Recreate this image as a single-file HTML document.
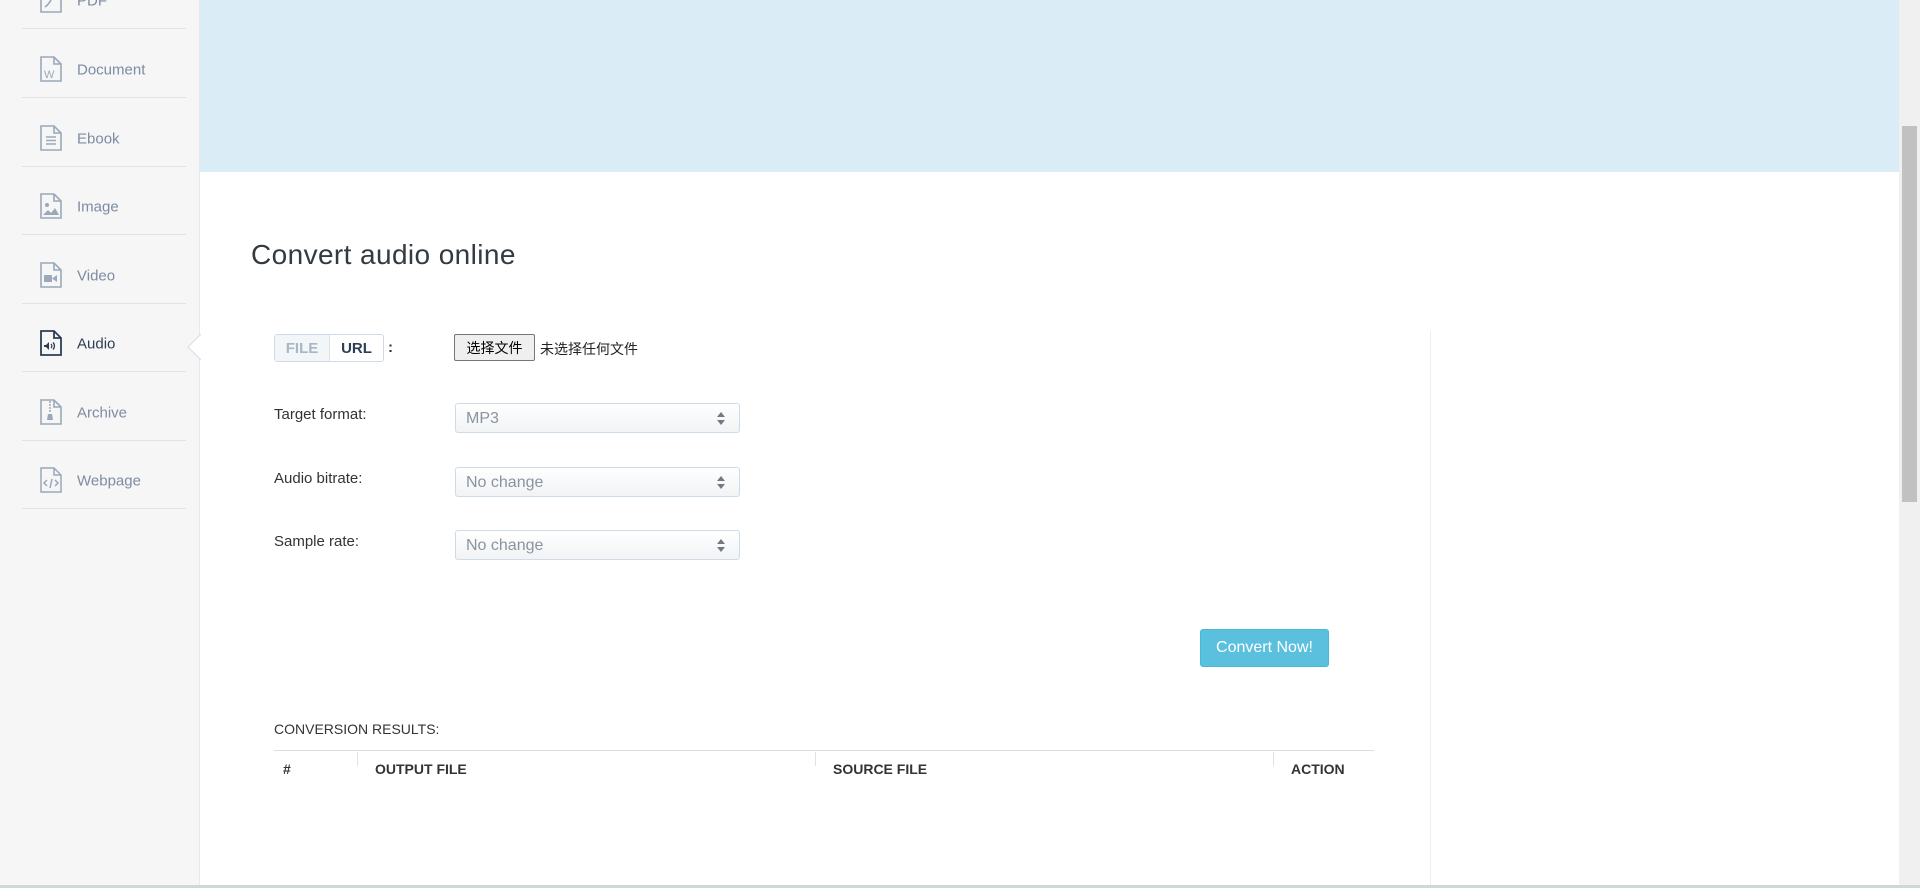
<!DOCTYPE html>
<html><head><meta charset="utf-8"><style>
*{margin:0;padding:0;box-sizing:border-box}
body{width:1920px;height:888px;overflow:hidden;background:#fff;font-family:"Liberation Sans","Noto Sans CJK SC",sans-serif;position:relative}
.side{position:absolute;left:0;top:0;width:200px;height:888px;background:#f6f6f6;border-right:1px solid #e6e9ee}
.item{position:absolute;left:22px;width:164px;height:68px;border-bottom:1px solid #dde3ea}
.item svg{position:absolute;left:18px;top:50%;margin-top:-8px}
.item span{position:absolute;left:55px;top:50%;transform:translateY(-50%);margin-top:6px;font-size:15px;color:#7d8ca3}
.item.act span{color:#2c3e55}
.hdr{position:absolute;left:200px;top:0;width:1699px;height:172px;background:#daedf6}
.sb{position:absolute;left:1899px;top:0;width:21px;height:885px;background:#f0f0f0}
.thumb{position:absolute;left:1902px;top:126px;width:15px;height:376px;background:#c1c1c1}
.bot{position:absolute;left:0;top:885px;width:1920px;height:3px;background:#cdd9d6}
h1{position:absolute;left:251px;top:239px;font-weight:normal;font-size:28px;letter-spacing:0.4px;color:#333a40}
.lbl{position:absolute;left:274px;font-size:15px;color:#333}
.tog{position:absolute;left:274px;top:334px;width:110px;height:28px;border:1px solid #cfdbe6;border-radius:3px;display:flex;font-weight:bold;font-size:15px}
.tog div{display:flex;align-items:center;justify-content:center}
.sel{position:absolute;left:455px;width:285px;height:30px;border:1px solid #cfdbe6;border-radius:3px;background:linear-gradient(#fff,#f1f3f5);font-size:16px;color:#8a94a0;padding:6px 10px}
.sel:after{content:"";position:absolute;right:14px;top:8px;border:4px solid transparent;border-bottom:5px solid #707a85;border-top:0}
.sel:before{content:"";position:absolute;right:14px;top:16px;border:4px solid transparent;border-top:5px solid #707a85;border-bottom:0}
.vline{position:absolute;left:1430px;top:331px;width:1px;height:554px;background:#eceff1}
.btn{position:absolute;left:1200px;top:629px;width:129px;height:38px;background:#5bc0de;border:1px solid #46b8da;border-radius:3px;color:#fff;font-size:16px;display:flex;align-items:center;justify-content:center}
.th{position:absolute;top:761px;font-size:14px;font-weight:bold;color:#333}
.cs{position:absolute;top:752px;width:1px;height:14px;background:#e2e2e2}
</style></head><body>
<div class="side">
<div class="item" style="top:-39px"><svg width="22" height="26" viewBox="0 0 22 26"><path d="M1 1h13l7 7v17H1z M14 1v7h7 M5 20c3-2 6-6 7-10" fill="none" stroke="#9aa8ba" stroke-width="1.6"/></svg><span>PDF</span></div>
<div class="item" style="top:30px"><svg width="22" height="26" viewBox="0 0 22 26"><path d="M1 1h13l7 7v17H1z M14 1v7h7" fill="none" stroke="#9aa8ba" stroke-width="1.6"/><text x="4" y="22" font-size="11" fill="#9aa8ba" font-family="Liberation Sans">W</text></svg><span>Document</span></div>
<div class="item" style="top:99px"><svg width="22" height="26" viewBox="0 0 22 26"><path d="M1 1h13l7 7v17H1z M14 1v7h7 M6 12h10M6 15.5h10M6 19h10" fill="none" stroke="#9aa8ba" stroke-width="1.6"/></svg><span>Ebook</span></div>
<div class="item" style="top:167px"><svg width="22" height="26" viewBox="0 0 22 26"><path d="M1 1h13l7 7v17H1z M14 1v7h7" fill="none" stroke="#9aa8ba" stroke-width="1.6"/><circle cx="7" cy="12" r="2" fill="#9aa8ba"/><path d="M3 22l5-5 3 3 4-5 4 7z" fill="#9aa8ba"/></svg><span>Image</span></div>
<div class="item" style="top:236px"><svg width="22" height="26" viewBox="0 0 22 26"><path d="M1 1h13l7 7v17H1z M14 1v7h7" fill="none" stroke="#9aa8ba" stroke-width="1.6"/><rect x="4" y="13" width="8" height="7" fill="#9aa8ba"/><path d="M12 16.5l5-3.5v7z" fill="#9aa8ba"/></svg><span>Video</span></div>
<div class="item act" style="top:304px"><svg width="22" height="26" viewBox="0 0 22 26"><path d="M1 1h13l7 7v17H1z M14 1v7h7" fill="none" stroke="#2c3e55" stroke-width="1.8"/><path d="M4 15h2l3-3v8l-3-3H4z" fill="#2c3e55"/><path d="M11 14a3 3 0 010 4M13 12.5a5 5 0 010 7" fill="none" stroke="#2c3e55" stroke-width="1.3"/></svg><span>Audio</span></div>
<div class="item" style="top:373px"><svg width="22" height="26" viewBox="0 0 22 26"><path d="M1 1h13l7 7v17H1z M14 1v7h7 M9 3h2M9 6h2M9 9h2M9 12h2" fill="none" stroke="#9aa8ba" stroke-width="1.6"/><path d="M8 15h4l1 6H7z" fill="#9aa8ba"/></svg><span>Archive</span></div>
<div class="item" style="top:441px"><svg width="22" height="26" viewBox="0 0 22 26"><path d="M1 1h13l7 7v17H1z M14 1v7h7 M7 13l-3 3 3 3M15 13l3 3-3 3M12 12l-2 9" fill="none" stroke="#9aa8ba" stroke-width="1.5"/></svg><span>Webpage</span></div>
<svg style="position:absolute;left:186px;top:334px" width="15" height="26" viewBox="0 0 15 26"><path d="M15 0L2 13l13 13" fill="#fff" stroke="#d6e2ec" stroke-width="1.2"/></svg>
</div>
<div class="hdr"></div>
<h1>Convert audio online</h1>
<div class="tog"><div style="width:55px;background:#f3f6f9;color:#a9b6c4;border-right:1px solid #dbe3ea">FILE</div><div style="width:53px;color:#2c3e55">URL</div></div>
<div class="lbl" style="left:388px;top:339px;font-weight:bold">:</div>
<div style="position:absolute;left:454px;top:334px;width:81px;height:27px;border:1px solid #767676;border-radius:2px;background:#efefef;font-size:14px;display:flex;align-items:center;justify-content:center;color:#000">选择文件</div>
<div style="position:absolute;left:540px;top:339px;font-size:14px;color:#222">未选择任何文件</div>
<div class="lbl" style="top:406px">Target format:</div>
<div class="sel" style="top:403px">MP3</div>
<div class="lbl" style="top:470px">Audio bitrate:</div>
<div class="sel" style="top:467px">No change</div>
<div class="lbl" style="top:533px">Sample rate:</div>
<div class="sel" style="top:530px">No change</div>
<div class="vline"></div>
<div class="btn">Convert Now!</div>
<div class="lbl" style="top:721px;font-size:14px">CONVERSION RESULTS:</div>
<div style="position:absolute;left:274px;top:750px;width:1100px;height:1px;background:#ddd"></div>
<div class="cs" style="left:357px"></div><div class="cs" style="left:815px"></div><div class="cs" style="left:1273px"></div>
<div class="th" style="left:283px">#</div>
<div class="th" style="left:375px">OUTPUT FILE</div>
<div class="th" style="left:833px">SOURCE FILE</div>
<div class="th" style="left:1291px">ACTION</div>
<div class="sb"></div><div class="thumb"></div>
<div class="bot"></div>
</body></html>
